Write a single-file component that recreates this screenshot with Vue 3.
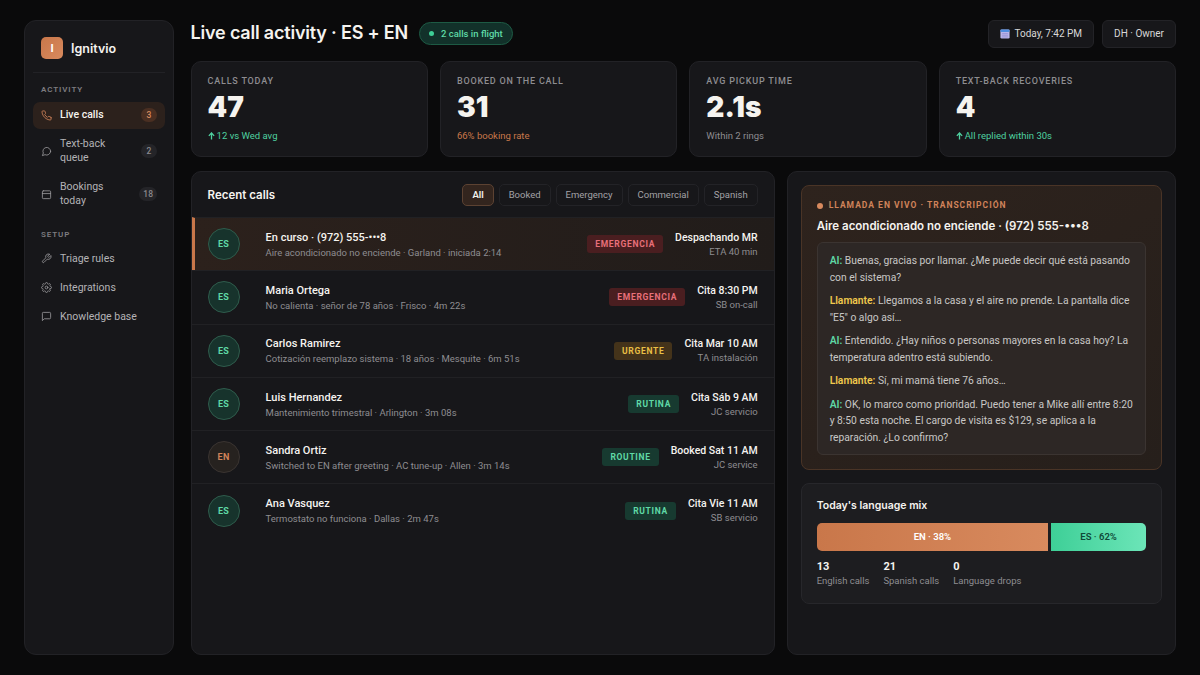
<template>
  <div class="page">
    <aside class="sidebar">
      <div class="brand">
        <div class="brand-mark">I</div>
        <span class="brand-name">Ignitvio</span>
      </div>
      <div class="nav-label">ACTIVITY</div>
      <a class="nav-item active">
        <svg class="nav-icon" viewBox="0 0 24 24"><path d="M22 16.9v3a2 2 0 0 1-2.2 2 19.8 19.8 0 0 1-8.6-3.1 19.5 19.5 0 0 1-6-6 19.8 19.8 0 0 1-3.1-8.7A2 2 0 0 1 4.1 2h3a2 2 0 0 1 2 1.7c.1 1 .4 1.9.7 2.8a2 2 0 0 1-.5 2.1L8.1 9.9a16 16 0 0 0 6 6l1.3-1.3a2 2 0 0 1 2.1-.4c.9.3 1.8.5 2.8.7a2 2 0 0 1 1.7 2z"/></svg>
        <span class="nav-text">Live calls</span>
        <span class="count hot">3</span>
      </a>
      <a class="nav-item">
        <svg class="nav-icon" viewBox="0 0 24 24"><path d="M21 11.5a8.4 8.4 0 0 1-12.3 7.4L3 21l2.1-5.7A8.4 8.4 0 1 1 21 11.5z"/></svg>
        <span class="nav-text">Text-back<br>queue</span>
        <span class="count">2</span>
      </a>
      <a class="nav-item">
        <svg class="nav-icon" viewBox="0 0 24 24"><rect x="3" y="4" width="18" height="17" rx="2"/><path d="M3 10h18"/></svg>
        <span class="nav-text">Bookings<br>today</span>
        <span class="count">18</span>
      </a>
      <div class="nav-label setup">SETUP</div>
      <a class="nav-item">
        <svg class="nav-icon" viewBox="0 0 24 24"><path d="M14.7 6.3a1 1 0 0 0 0 1.4l1.6 1.6a1 1 0 0 0 1.4 0l3.8-3.8a6 6 0 0 1-7.9 7.9l-6.9 6.9a2.1 2.1 0 0 1-3-3l6.9-6.9a6 6 0 0 1 7.9-7.9z"/></svg>
        <span class="nav-text">Triage rules</span>
      </a>
      <a class="nav-item">
        <svg class="nav-icon" viewBox="0 0 24 24"><circle cx="12" cy="12" r="3"/><path d="M19.4 15a1.7 1.7 0 0 0 .3 1.8l.1.1a2 2 0 1 1-2.9 2.9l-.1-.1a1.7 1.7 0 0 0-2.8 1.2v.1a2 2 0 1 1-4 0V21a1.7 1.7 0 0 0-2.9-1.2l-.1.1a2 2 0 1 1-2.8-2.9l.1-.1a1.7 1.7 0 0 0-1.2-2.8H3a2 2 0 1 1 0-4h.1a1.7 1.7 0 0 0 1.2-2.9l-.1-.1a2 2 0 1 1 2.9-2.8l.1.1a1.7 1.7 0 0 0 2.8-1.2V3a2 2 0 1 1 4 0v.1a1.7 1.7 0 0 0 2.9 1.2l.1-.1a2 2 0 1 1 2.8 2.9l-.1.1a1.7 1.7 0 0 0 1.2 2.8h.1a2 2 0 1 1 0 4h-.1a1.7 1.7 0 0 0-1.5 1z"/></svg>
        <span class="nav-text">Integrations</span>
      </a>
      <a class="nav-item">
        <svg class="nav-icon" viewBox="0 0 24 24"><path d="M21 15a2 2 0 0 1-2 2H7l-4 4V5a2 2 0 0 1 2-2h14a2 2 0 0 1 2 2z"/></svg>
        <span class="nav-text">Knowledge base</span>
      </a>
    </aside>

    <main class="main">
      <header class="topbar">
        <h1 class="title">Live call activity · ES + EN</h1>
        <span class="flight"><i class="flight-dot"></i>2 calls in flight</span>
        <div class="top-right">
          <span class="top-chip">
            <svg class="cal" viewBox="0 0 12 12"><rect x="0.5" y="0.5" width="11" height="11" rx="1.5" fill="#b9b5e8"/><rect x="0.5" y="0.5" width="11" height="3" rx="1.2" fill="#4f8fe0"/><path d="M2.5 5.5h7M2.5 7.5h7M2.5 9.5h7" stroke="#8f8ad0" stroke-width="0.8"/></svg>
            Today, 7:42 PM
          </span>
          <span class="top-chip">DH · Owner</span>
        </div>
      </header>

      <section class="kpis">
        <div v-for="k in kpis" :key="k.label" class="kpi">
          <div class="kpi-label">{{ k.label }}</div>
          <div class="kpi-value">{{ k.value }}</div>
          <div class="kpi-note" :class="k.tone">
            <svg v-if="k.up" class="up" viewBox="0 0 8 9"><path d="M4 8.5V2M1 4.4 4 1l3 3.4"/></svg>
            {{ k.note }}
          </div>
        </div>
      </section>

      <section class="content">
        <div class="panel calls">
          <div class="calls-head">
            <h2 class="calls-title">Recent calls</h2>
            <div class="filters">
              <span v-for="(f, i) in filters" :key="f" class="filter" :class="{ on: i === 0 }">{{ f }}</span>
            </div>
          </div>
          <div v-for="(c, i) in calls" :key="i" class="call" :class="{ live: c.live }">
            <div class="avatar" :class="c.lang.toLowerCase()">{{ c.lang }}</div>
            <div class="call-main">
              <div class="call-name">{{ c.name }}</div>
              <div class="call-sub">{{ c.sub }}</div>
            </div>
            <span class="tag" :class="c.tone">{{ c.tag }}</span>
            <div class="call-side">
              <div class="call-next">{{ c.next }}</div>
              <div class="call-who">{{ c.who }}</div>
            </div>
          </div>
        </div>

        <div class="panel side">
          <div class="live-card">
            <div class="live-label"><i class="live-dot"></i>LLAMADA EN VIVO · TRANSCRIPCIÓN</div>
            <div class="live-title">Aire acondicionado no enciende · (972) 555-•••8</div>
            <div class="transcript">
              <p v-for="(t, i) in transcript" :key="i"><b :class="t.who === 'AI' ? 'ai' : 'caller'">{{ t.who }}:</b> {{ t.text }}</p>
            </div>
          </div>
          <div class="mix-card">
            <div class="mix-title">Today's language mix</div>
            <div class="mix-bar">
              <div class="mix-en">EN · 38%</div>
              <div class="mix-es">ES · 62%</div>
            </div>
            <div class="mix-stats">
              <div v-for="s in mix" :key="s.label">
                <div class="mix-num">{{ s.num }}</div>
                <div class="mix-label">{{ s.label }}</div>
              </div>
            </div>
          </div>
        </div>
      </section>
    </main>
  </div>
</template>

<script setup>
const kpis = [
  { label: 'CALLS TODAY', value: '47', note: '12 vs Wed avg', tone: 'green', up: true },
  { label: 'BOOKED ON THE CALL', value: '31', note: '66% booking rate', tone: 'orange' },
  { label: 'AVG PICKUP TIME', value: '2.1s', note: 'Within 2 rings', tone: '' },
  { label: 'TEXT-BACK RECOVERIES', value: '4', note: 'All replied within 30s', tone: 'green', up: true }
]

const filters = ['All', 'Booked', 'Emergency', 'Commercial', 'Spanish']

const calls = [
  { lang: 'ES', name: 'En curso · (972) 555-•••8', sub: 'Aire acondicionado no enciende · Garland · iniciada 2:14', tag: 'EMERGENCIA', tone: 'red', next: 'Despachando MR', who: 'ETA 40 min', live: true },
  { lang: 'ES', name: 'Maria Ortega', sub: 'No calienta · señor de 78 años · Frisco · 4m 22s', tag: 'EMERGENCIA', tone: 'red', next: 'Cita 8:30 PM', who: 'SB on-call' },
  { lang: 'ES', name: 'Carlos Ramirez', sub: 'Cotización reemplazo sistema · 18 años · Mesquite · 6m 51s', tag: 'URGENTE', tone: 'amber', next: 'Cita Mar 10 AM', who: 'TA instalación' },
  { lang: 'ES', name: 'Luis Hernandez', sub: 'Mantenimiento trimestral · Arlington · 3m 08s', tag: 'RUTINA', tone: 'mint', next: 'Cita Sáb 9 AM', who: 'JC servicio' },
  { lang: 'EN', name: 'Sandra Ortiz', sub: 'Switched to EN after greeting · AC tune-up · Allen · 3m 14s', tag: 'ROUTINE', tone: 'mint', next: 'Booked Sat 11 AM', who: 'JC service' },
  { lang: 'ES', name: 'Ana Vasquez', sub: 'Termostato no funciona · Dallas · 2m 47s', tag: 'RUTINA', tone: 'mint', next: 'Cita Vie 11 AM', who: 'SB servicio' }
]

const transcript = [
  { who: 'AI', text: 'Buenas, gracias por llamar. ¿Me puede decir qué está pasando con el sistema?' },
  { who: 'Llamante', text: 'Llegamos a la casa y el aire no prende. La pantalla dice "E5" o algo así…' },
  { who: 'AI', text: 'Entendido. ¿Hay niños o personas mayores en la casa hoy? La temperatura adentro está subiendo.' },
  { who: 'Llamante', text: 'Sí, mi mamá tiene 76 años…' },
  { who: 'AI', text: 'OK, lo marco como prioridad. Puedo tener a Mike allí entre 8:20 y 8:50 esta noche. El cargo de visita es $129, se aplica a la reparación. ¿Lo confirmo?' }
]

const mix = [
  { num: '13', label: 'English calls' },
  { num: '21', label: 'Spanish calls' },
  { num: '0', label: 'Language drops' }
]
</script>

<style>
html, body {
  margin: 0;
  background: #0a0a0b;
}
</style>

<style scoped>
.page {
  box-sizing: border-box;
  width: 1200px;
  height: 675px;
  padding: 20px 24px;
  display: flex;
  gap: 16.6px;
  background: #0a0a0b;
  color: #f5f3ef;
  font-family: Roboto, "Noto Sans", sans-serif;
  overflow: hidden;
}

.sidebar {
  box-sizing: border-box;
  width: 150px;
  flex: none;
  padding: 16px 8px;
  background: #17171a;
  border: 1px solid #222226;
  border-radius: 12px;
}

.brand {
  display: flex;
  align-items: center;
  gap: 8px;
  padding: 0 8px 13px;
  border-bottom: 1px solid #222226;
}

.brand-mark {
  width: 22px;
  height: 22px;
  border-radius: 5px;
  background: linear-gradient(135deg, #c9774a, #d88a5e);
  display: flex;
  align-items: center;
  justify-content: center;
  font-size: 11px;
  font-weight: 700;
  color: #fff;
}

.brand-name {
  font-family: Inter, sans-serif;
  font-size: 12.5px;
  font-weight: 600;
  color: #f5f3ef;
}

.nav-label {
  margin: 11px 8px 6.5px;
  font-size: 8px;
  font-weight: 600;
  line-height: 11px;
  letter-spacing: 0.9px;
  color: #7d7c80;
}

.nav-label.setup {
  margin-top: 14px;
  margin-bottom: 5px;
}

.nav-item {
  display: flex;
  align-items: center;
  gap: 8px;
  padding: 6.75px 8px;
  margin-bottom: 1.5px;
  border-radius: 7px;
  font-size: 10.5px;
  line-height: 14px;
  color: #b4b3b6;
}

.nav-item.active {
  background: #2c211c;
  color: #f5f3ef;
  font-weight: 500;
}

.nav-icon {
  width: 11px;
  height: 11px;
  flex: none;
  fill: none;
  stroke: #9a999c;
  stroke-width: 1.8;
  stroke-linecap: round;
  stroke-linejoin: round;
}

.active .nav-icon {
  stroke: #d0835a;
}

.nav-text {
  flex: 1;
}

.count {
  flex: none;
  min-width: 8px;
  padding: 1px 4px;
  border-radius: 8px;
  background: #242428;
  font-size: 8.5px;
  font-weight: 500;
  line-height: 12px;
  text-align: center;
  color: #8b8a8e;
}

.count.hot {
  background: #4a2f22;
  color: #d88a5e;
}

.main {
  flex: 1;
  min-width: 0;
  display: flex;
  flex-direction: column;
  gap: 14px;
}

.topbar {
  display: flex;
  align-items: center;
  gap: 11px;
  height: 27px;
}

.title {
  margin: 0 0 2px;
  font-family: Inter, sans-serif;
  font-size: 18px;
  font-weight: 600;
  letter-spacing: -0.2px;
  color: #f5f3ef;
}

.flight {
  display: flex;
  align-items: center;
  gap: 7px;
  height: 23px;
  padding: 0 9px;
  box-sizing: border-box;
  border: 1px solid #1d5a44;
  border-radius: 12px;
  background: #12312a;
  font-size: 9.5px;
  font-weight: 500;
  color: #5fd9a6;
}

.flight-dot {
  width: 5px;
  height: 5px;
  border-radius: 50%;
  background: #3ecf97;
}

.top-right {
  margin-left: auto;
  display: flex;
  gap: 8px;
}

.top-chip {
  box-sizing: border-box;
  display: flex;
  align-items: center;
  gap: 4px;
  height: 28px;
  padding: 0 11px;
  background: #17171a;
  border: 1px solid #232327;
  border-radius: 6px;
  font-size: 10px;
  color: #d8d7d8;
}

.cal {
  width: 10px;
  height: 10px;
}

.kpis {
  display: grid;
  grid-template-columns: repeat(4, 1fr);
  gap: 12px;
}

.kpi {
  box-sizing: border-box;
  height: 96px;
  padding: 13px 16px;
  background: #17171a;
  border: 1px solid #222226;
  border-radius: 10px;
}

.kpi-label {
  font-size: 9px;
  font-weight: 500;
  letter-spacing: 0.8px;
  line-height: 12px;
  color: #8e8d91;
}

.kpi-value {
  margin-top: 3px;
  font-family: Inter, sans-serif;
  font-size: 28px;
  font-weight: 900;
  line-height: 34px;
  color: #f5f3ef;
}

.kpi-note {
  display: flex;
  align-items: center;
  gap: 2px;
  margin-top: 5px;
  font-size: 9.5px;
  line-height: 13px;
  color: #8e8d91;
}

.kpi-note.green {
  color: #4fd1a0;
}

.kpi-note.orange {
  color: #c9774a;
}

.up {
  width: 7px;
  height: 8px;
  fill: none;
  stroke: #4fd1a0;
  stroke-width: 1.5;
}

.content {
  flex: 1;
  min-height: 0;
  display: grid;
  grid-template-columns: 1.5fr 1fr;
  gap: 12px;
}

.panel {
  box-sizing: border-box;
  background: #17171a;
  border: 1px solid #222226;
  border-radius: 10px;
  overflow: hidden;
}

.calls-head {
  display: flex;
  align-items: center;
  justify-content: space-between;
  height: 45px;
  padding: 0 16px;
}

.calls-title {
  margin: 0;
  font-family: Inter, sans-serif;
  font-size: 11.5px;
  font-weight: 600;
  color: #f5f3ef;
}

.filters {
  display: flex;
  gap: 5px;
}

.filter {
  padding: 0 9px;
  height: 20px;
  line-height: 20px;
  border: 1px solid #232327;
  border-radius: 5px;
  font-size: 9.5px;
  color: #a3a2a6;
}

.filter.on {
  background: #33251e;
  border-color: #5c4232;
  color: #f5f3ef;
  font-weight: 600;
}

.call {
  box-sizing: border-box;
  height: 53.3px;
  display: flex;
  align-items: center;
  padding: 0 16px;
  border-top: 1px solid #212124;
}

.call.live {
  background: linear-gradient(90deg, #2c211c, #211c1a);
  border-left: 3px solid #c9774a;
  padding-left: 13px;
}

.avatar {
  width: 32px;
  height: 32px;
  flex: none;
  box-sizing: border-box;
  border-radius: 50%;
  display: flex;
  align-items: center;
  justify-content: center;
  font-size: 9px;
  font-weight: 700;
  letter-spacing: 0.3px;
}

.avatar.es {
  background: #17332c;
  border: 1px solid #2f5c4c;
  color: #5fd9a6;
}

.avatar.en {
  background: #26221f;
  border: 1px solid #3a3431;
  color: #d0835a;
}

.call-main {
  flex: 1;
  min-width: 0;
  margin-left: 26px;
}

.call-name {
  font-size: 11px;
  font-weight: 500;
  line-height: 15px;
  color: #f5f3ef;
}

.call-sub {
  margin-top: 1px;
  font-size: 9.5px;
  line-height: 13px;
  color: #8e8d91;
  white-space: nowrap;
}

.tag {
  flex: none;
  margin-left: 12px;
  padding: 0 8px;
  height: 18px;
  line-height: 18px;
  border-radius: 3px;
  font-size: 8.5px;
  font-weight: 700;
  letter-spacing: 0.7px;
}

.tag.red {
  background: #4a1e20;
  color: #e8707a;
}

.tag.amber {
  background: #44331a;
  color: #e8bf45;
}

.tag.mint {
  background: #173a30;
  color: #5fd9a6;
}

.call-side {
  flex: none;
  margin-left: 12px;
  text-align: right;
}

.call-next {
  font-size: 10.5px;
  font-weight: 500;
  line-height: 14px;
  color: #f5f3ef;
}

.call-who {
  font-size: 9.5px;
  line-height: 13px;
  color: #8e8d91;
}

.side {
  padding: 13px;
  display: flex;
  flex-direction: column;
  gap: 13px;
}

.live-card {
  box-sizing: border-box;
  height: 285px;
  padding: 14px 15px;
  background: linear-gradient(145deg, #2e231d, #261f1b);
  border: 1px solid #4a3426;
  border-radius: 8px;
}

.live-label {
  display: flex;
  align-items: center;
  gap: 6px;
  font-size: 8.5px;
  font-weight: 700;
  letter-spacing: 1px;
  line-height: 11px;
  color: #d0835a;
}

.live-dot {
  width: 6px;
  height: 6px;
  border-radius: 50%;
  background: #d88a5e;
}

.live-title {
  margin-top: 7px;
  font-family: Inter, sans-serif;
  font-size: 11.5px;
  font-weight: 600;
  line-height: 17px;
  color: #f5f3ef;
  white-space: nowrap;
}

.transcript {
  box-sizing: border-box;
  height: 213px;
  margin-top: 7px;
  padding: 10px 12px;
  background: #2d2725;
  border: 1px solid #3b3431;
  border-radius: 6px;
}

.transcript p {
  margin: 0 0 7px;
  font-size: 10.3px;
  line-height: 16.5px;
  color: #c9c7c6;
}

.transcript b {
  font-weight: 600;
}

.ai {
  color: #5fd9a6;
}

.caller {
  color: #f0c94d;
}

.mix-card {
  box-sizing: border-box;
  height: 121px;
  padding: 14px 15px;
  background: #1d1d20;
  border: 1px solid #27272b;
  border-radius: 8px;
}

.mix-title {
  font-family: Inter, sans-serif;
  font-size: 10.5px;
  font-weight: 600;
  line-height: 15px;
  color: #f5f3ef;
}

.mix-bar {
  display: flex;
  gap: 3px;
  height: 28px;
  margin-top: 10px;
  border-radius: 5px;
  overflow: hidden;
  font-size: 9.5px;
  font-weight: 600;
  line-height: 28px;
  text-align: center;
}

.mix-en {
  flex: 232;
  background: linear-gradient(90deg, #c9774a, #d88a5e);
  color: #fff;
}

.mix-es {
  flex: 95;
  background: linear-gradient(90deg, #3ecf97, #6ce5b8);
  color: #0f4a38;
}

.mix-stats {
  display: flex;
  gap: 14px;
  margin-top: 8px;
}

.mix-num {
  font-size: 11px;
  font-weight: 700;
  line-height: 15px;
  color: #f5f3ef;
}

.mix-label {
  font-size: 9.5px;
  line-height: 13px;
  color: #8e8d91;
}
</style>
